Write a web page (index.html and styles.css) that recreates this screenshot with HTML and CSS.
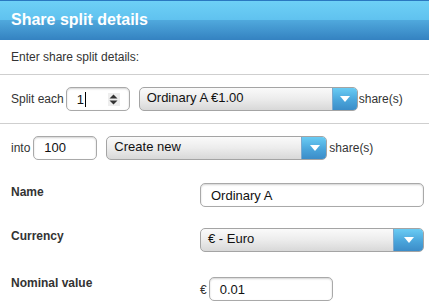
FILE: index.html
```html
<!DOCTYPE html>
<html>
<head>
<meta charset="utf-8">
<link rel="stylesheet" href="styles.css">
</head>
<body>
<div class="panel">
  <div class="header"><span class="title">Share split details</span></div>
  <div class="intro">Enter share split details:</div>
  <div class="row row1">
    <span class="lbl">Split each</span>
    <div class="input spin"><span class="val">1</span><span class="caret"></span>
      <span class="spinbtn"><svg width="9" height="11" viewBox="0 0 9 11"><path d="M4.5 0.5 L8.5 4.5 H0.5 Z" fill="#333"/><path d="M4.5 10.5 L8.5 6.5 H0.5 Z" fill="#333"/></svg></span>
    </div>
    <div class="select sel1"><span class="stext">Ordinary A €1.00</span><span class="sbtn"><svg width="10" height="6" viewBox="0 0 10 6"><path d="M0 0 H10 L5 6 Z" fill="#fff"/></svg></span></div>
    <span class="lbl">share(s)</span>
  </div>
  <div class="row row2">
    <span class="lbl">into</span>
    <div class="input into"><span class="val">100</span></div>
    <div class="select sel2"><span class="stext">Create new</span><span class="sbtn"><svg width="10" height="6" viewBox="0 0 10 6"><path d="M0 0 H10 L5 6 Z" fill="#fff"/></svg></span></div>
    <span class="lbl">share(s)</span>
  </div>
  <div class="form">
    <div class="flabel fl-name">Name</div>
    <div class="fcell"><div class="input wide"><span class="val">Ordinary A</span></div></div>
    <div class="flabel fl-cur">Currency</div>
    <div class="fcell"><div class="select wide"><span class="stext">€ - Euro</span><span class="sbtn big"><svg width="10" height="6" viewBox="0 0 10 6"><path d="M0 0 H10 L5 6 Z" fill="#fff"/></svg></span></div></div>
    <div class="flabel fl-nom">Nominal value</div>
    <div class="fcell nom"><span class="euro">€</span><div class="input nomin"><span class="val">0.01</span></div></div>
  </div>
</div>
</body>
</html>
```
FILE: styles.css
```css
* { box-sizing: border-box; }
html, body { margin: 0; padding: 0; background: #fff; }
body { font-family: "Liberation Sans", Arial, sans-serif; font-size: 12px; color: #333; width: 429px; height: 308px; overflow: hidden; }
.panel { width: 429px; }
.header {
  height: 40px;
  border-top: 1px solid #2a78c0;
  background: linear-gradient(to bottom, #6dd0f6 0%, #60c2ef 48%, #4fa8dc 50%, #3482c1 100%);
  display: flex; align-items: center;
  padding-left: 11px;
}
.title { color: #fff; font-weight: bold; font-size: 16px; padding-bottom: 2px; }
.intro {
  height: 35px; display: flex; align-items: center; padding-left: 11px;
  border-bottom: 1px solid #cfcfcf; font-size: 12px; color: #333;
}
.row { display: flex; align-items: center; padding-left: 11px; border-bottom: 1px solid #cfcfcf; }
.row1 { height: 49px; }
.row2 { height: 47px; border-bottom: none; padding-top: 0px; }
.lbl { font-size: 12px; color: #333; }
.input {
  height: 24px; border: 1px solid #a9a9a9; border-radius: 5px; background: #fff;
  box-shadow: inset 0 1px 2px rgba(0,0,0,0.18);
  display: flex; align-items: center; padding-left: 10px; position: relative;
  font-size: 13px; color: #111;
}
.spin { width: 64px; margin-left: 2px; margin-right: 9px; }
.caret { width: 1px; height: 15px; background: #000; margin-left: 1px; }
.spinbtn { position: absolute; right: 9px; top: 5px; width: 12px; height: 13px; background: #eee; display: flex; align-items: center; justify-content: center; }
.into { width: 64px; margin-left: 3px; margin-right: 9px; }
.select {
  height: 24px; border: 1px solid #a4a4a4; border-radius: 5px;
  background: linear-gradient(to bottom, #fafafa 0%, #ececec 50%, #d8d8d8 100%);
  display: flex; align-items: center; padding-left: 7px; position: relative;
  font-size: 13px; color: #111; overflow: hidden;
}
.stext { flex: 1; margin-top: -3px; }
.sbtn {
  width: 26px; height: 24px; margin-top: -1px; margin-bottom: -1px; margin-right: -1px;
  border-radius: 0 5px 5px 0; border-left: 1px solid #7aa9cf;
  background: linear-gradient(to bottom, #6ccff6 0%, #4aa5db 55%, #3a8ac6 100%);
  display: flex; align-items: center; justify-content: center;
}
.sbtn.big { width: 31px; }
.sel1 { width: 219px; margin-right: 1px; }
.sel2 { width: 221px; margin-right: 2px; }
.form { display: grid; grid-template-columns: 189px 229px; padding-left: 11px; }
.flabel { font-weight: bold; font-size: 12px; color: #333; }
.fl-name { height: 45px; padding-top: 14px; }
.fl-cur { height: 46px; padding-top: 13px; }
.fl-nom { height: 46px; padding-top: 14px; }
.fcell { display: flex; align-items: flex-start; }
.fl-name + .fcell { padding-top: 12px; }
.fl-cur + .fcell { padding-top: 12px; }
.fl-nom + .fcell { padding-top: 15px; }
.wide { width: 224px; }
.euro { font-size: 12px; margin-top: 6px; margin-right: 2px; }
.nomin { width: 124px; }
```
